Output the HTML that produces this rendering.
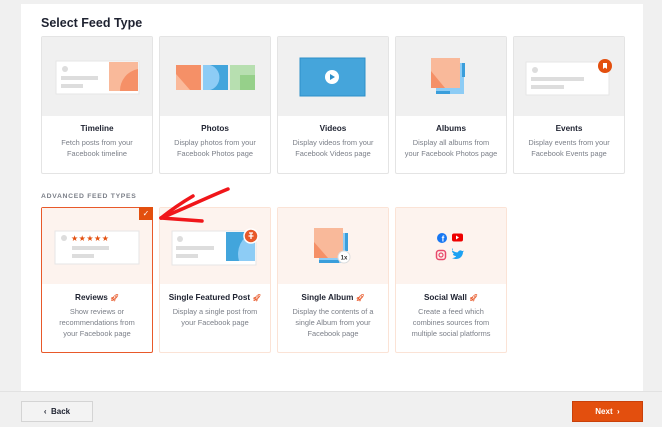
<!DOCTYPE html>
<html><head><meta charset="utf-8"><style>
*{box-sizing:border-box;margin:0;padding:0}
body{width:662px;height:427px;background:#f0f0f0;font-family:"Liberation Sans",sans-serif;position:relative;overflow:hidden}
.panel{position:absolute;left:21px;top:4px;width:622px;height:387px;background:#fff}
.footer{position:absolute;left:0;top:391px;width:662px;height:36px;background:#f0f0f0;border-top:1px solid #e2e2e2}
h1{position:absolute;left:41px;top:16px;font-size:12.5px;font-weight:bold;color:#1e2230}
.card{position:absolute;width:112px;border:1px solid #e4e4e4;border-radius:2px;background:#fff;text-align:center}
.card .img{position:absolute;left:0;top:0;right:0;background:#f0f0f0}
.card .t{position:absolute;left:0;right:0;font-size:8.2px;font-weight:bold;color:#1e2230}
.card .d{position:absolute;left:2px;right:2px;font-size:7.4px;line-height:10.8px;color:#7b7f88}
.r1{top:36px;height:138px}.r1 .img{height:79px}.r1 .t{top:87px}.r1 .d{top:101px}
.r2{top:207px;height:146px;border-color:#fbe3d6}.r2 .img{height:76px;background:#fdf3ee}.r2 .t{top:85px}.r2 .d{top:99px}
.sel{border:1.5px solid #e8592a}
.adv{position:absolute;left:41px;top:193px;font-size:6.8px;letter-spacing:.7px;color:#7b7f88;font-weight:bold}
.btn{position:absolute;top:401px;height:21px;font-size:8px;font-weight:bold;display:flex;align-items:center;justify-content:center}
.rk{color:#e8592a;font-size:7px}
</style></head><body>
<div class="panel"></div>
<h1>Select Feed Type</h1>

<div class="card r1" style="left:41px"><div class="img"><svg width="112" height="79"><rect x="14" y="24" width="83" height="33" fill="#fff" stroke="#e6e6e6"/><circle cx="23" cy="32" r="3" fill="#ddd"/><rect x="19" y="39" width="37" height="4" fill="#ddd"/><rect x="19" y="47" width="22" height="4" fill="#ddd"/><rect x="67" y="25" width="29" height="29" fill="#f9b99a"/><path d="M96 32a22 22 0 0 0-18 22h18z" fill="#f59067"/></svg></div><div class="t">Timeline</div><div class="d">Fetch posts from your<br>Facebook timeline</div></div>

<div class="card r1" style="left:159px"><div class="img"><svg width="112" height="79"><rect x="16" y="28" width="25" height="25" fill="#f59067"/><path d="M16 53v-16l14 16z" fill="#fab99a"/><rect x="43" y="28" width="25" height="25" fill="#8dccf5"/><path d="M50 28h18v25h-18a13 13 0 0 0 0-25z" fill="#42a5dc"/><rect x="70" y="28" width="25" height="25" fill="#b7dfb0"/><rect x="80" y="38" width="15" height="15" fill="#96d08a"/></svg></div><div class="t">Photos</div><div class="d">Display photos from your<br>Facebook Photos page</div></div>

<div class="card r1" style="left:277px"><div class="img"><svg width="112" height="79"><rect x="22" y="21" width="65" height="38" fill="#45a5db" stroke="#2d8fc9"/><circle cx="54" cy="40" r="7" fill="#fff"/><path d="M52 37l5 3-5 3z" fill="#2d8fc9"/></svg></div><div class="t">Videos</div><div class="d">Display videos from your<br>Facebook Videos page</div></div>

<div class="card r1" style="left:395px"><div class="img"><svg width="112" height="79"><rect x="40" y="26" width="28" height="31" fill="#8dccf5"/><rect x="66" y="26" width="3" height="14" fill="#3a9edb"/><rect x="40" y="54" width="14" height="3" fill="#3a9edb"/><rect x="35" y="21" width="29" height="30" fill="#f9b99a"/><path d="M35 51v-17l14 17z" fill="#f59067"/></svg></div><div class="t">Albums</div><div class="d">Display all albums from<br>your Facebook Photos page</div></div>

<div class="card r1" style="left:513px"><div class="img"><svg width="112" height="79"><rect x="12" y="25" width="83" height="33" fill="#fff" stroke="#e6e6e6"/><circle cx="21" cy="33" r="3" fill="#ddd"/><rect x="17" y="40" width="53" height="4" fill="#ddd"/><rect x="17" y="48" width="33" height="4" fill="#ddd"/><circle cx="91" cy="29" r="7" fill="#e34f0e"/><path d="M89 26h4v6l-2-1.5-2 1.5z" fill="#fff"/></svg></div><div class="t">Events</div><div class="d">Display events from your<br>Facebook Events page</div></div>

<div class="adv">ADVANCED FEED TYPES</div>

<div class="card r2 sel" style="left:41px"><div class="img"><svg width="112" height="76"><rect x="13" y="23" width="84" height="33" fill="#fff" stroke="#e6e6e6"/><circle cx="22" cy="30" r="3" fill="#ddd"/><text x="29" y="33" font-size="8" fill="#e34f0e" letter-spacing="0.5">★★★★★</text><rect x="30" y="38" width="37" height="4" fill="#ddd"/><rect x="30" y="46" width="22" height="4" fill="#ddd"/></svg></div><div style="position:absolute;right:-1px;top:-1px;width:14px;height:13px;background:#e34f0e;color:#fff;font-size:8px;line-height:13px">✓</div><div class="t">Reviews <span class="rk">🚀︎</span></div><div class="d">Show reviews or<br>recommendations from<br>your Facebook page</div></div>

<div class="card r2" style="left:159px"><div class="img"><svg width="112" height="76"><rect x="12" y="23" width="84" height="34" fill="#fff" stroke="#e6e6e6"/><circle cx="20" cy="31" r="3" fill="#ddd"/><rect x="16" y="38" width="38" height="4" fill="#ddd"/><rect x="16" y="46" width="22" height="4" fill="#ddd"/><rect x="66" y="24" width="29" height="29" fill="#8dccf5"/><path d="M66 24h27a24 24 0 0 0-14 29h-13z" fill="#42a5dc"/><circle cx="91" cy="28" r="7" fill="#e8592a" stroke="#fff" stroke-width="1.5"/><path d="M89 25h4M91 25v6M88.5 28h5" stroke="#fff" stroke-width="1.3"/></svg></div><div class="t">Single Featured Post <span class="rk">🚀︎</span></div><div class="d">Display a single post from<br>your Facebook page</div></div>

<div class="card r2" style="left:277px"><div class="img"><svg width="112" height="76"><rect x="41" y="25" width="28" height="30" fill="#8dccf5"/><rect x="67" y="25" width="3" height="18" fill="#3a9edb"/><rect x="41" y="52" width="20" height="3" fill="#3a9edb"/><rect x="36" y="20" width="29" height="30" fill="#f9b99a"/><path d="M36 50v-16l14 16z" fill="#f59067"/><circle cx="66" cy="49" r="6" fill="#fff" stroke="#ddd"/><text x="66" y="51.5" font-size="6" font-weight="bold" text-anchor="middle" fill="#333">1x</text></svg></div><div class="t">Single Album <span class="rk">🚀︎</span></div><div class="d">Display the contents of a<br>single Album from your<br>Facebook page</div></div>

<div class="card r2" style="left:395px"><div class="img"><svg width="112" height="76"><circle cx="46" cy="30" r="5" fill="#1877f2"/><text x="47" y="33.5" font-size="8" font-weight="bold" fill="#fff" text-anchor="middle">f</text><rect x="56" y="25.5" width="11" height="8" rx="2" fill="#e00"/><path d="M60 27.5l3 2-3 2z" fill="#fff"/><rect x="40.5" y="42.5" width="9" height="9" rx="2.5" fill="none" stroke="#e8486b" stroke-width="1.5"/><circle cx="45" cy="47" r="2" fill="none" stroke="#e8486b" stroke-width="1.2"/><path d="M57 43c2 1 4 2 5 1 1-2 3-2 4-1 1 0 2 0 2-1 0 1-1 2-1 2 0 5-5 9-11 6 2 0 4-1 4-2-2 0-3-1-3-2h1c-1-1-2-2-2-3h1c-1-1-1-2 0-3z" fill="#1da1f2"/></svg></div><div class="t">Social Wall <span class="rk">🚀︎</span></div><div class="d">Create a feed which<br>combines sources from<br>multiple social platforms</div></div>

<svg style="position:absolute;left:0;top:0" width="662" height="427"><g stroke="#f0161a" stroke-width="3.5" fill="none" stroke-linecap="round"><path d="M161 218c20-8 45-20 67-29"/><path d="M161 218c10-8 20-15 32-22"/><path d="M161 218c14 1 28 2 41 3"/></g></svg>

<div class="footer"></div>
<div class="btn" style="left:21px;width:72px;background:#f3f3f3;border:1px solid #d4d4d4;color:#1e2230">‹&nbsp;&nbsp;Back</div>
<div class="btn" style="left:572px;width:71px;background:#e34f0e;border:1px solid #c9400a;color:#fff">Next&nbsp;&nbsp;›</div>
</body></html>
